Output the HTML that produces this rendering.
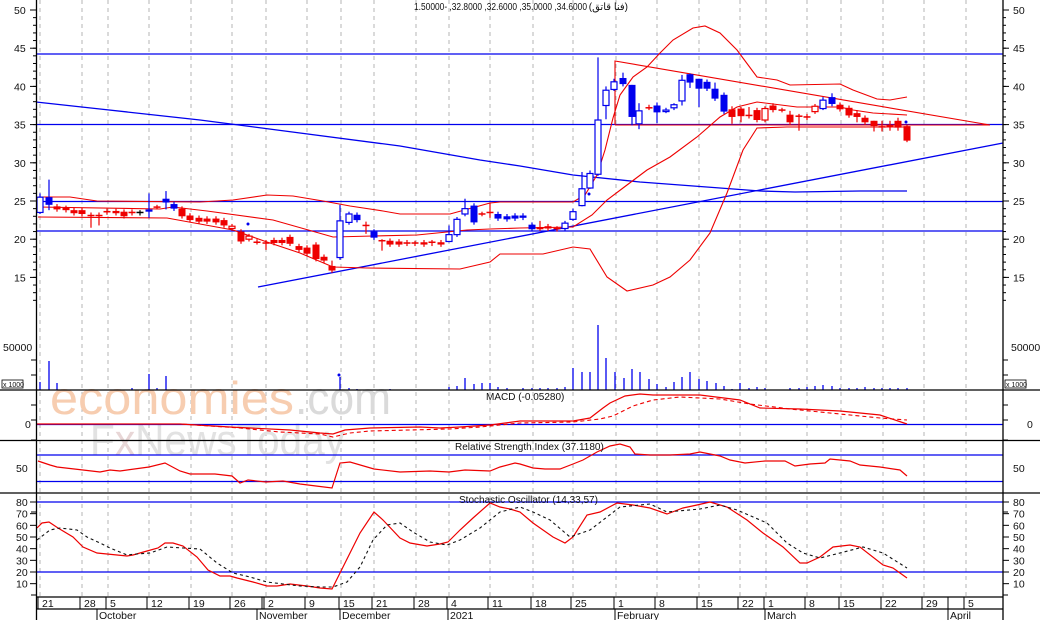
<!DOCTYPE html>
<html><head><meta charset="utf-8"><style>
html,body{margin:0;padding:0;background:#fff;width:1040px;height:620px;overflow:hidden}
svg{display:block}
text{font-family:"Liberation Sans","Noto Sans CJK SC",sans-serif;font-size:10.5px;fill:#111}
</style></head><body>
<svg id="s" width="1040" height="620" viewBox="0 0 1040 620" xmlns="http://www.w3.org/2000/svg">
<rect width="1040" height="620" fill="#fff"/>
<g id="grid" stroke="#b4b4b4" stroke-dasharray="4,4" stroke-width="1"></g>
<text x="50" y="414" textLength="244" lengthAdjust="spacingAndGlyphs" style="font-size:46px;fill:#f7cdb0">economies</text>
<text x="295" y="414" textLength="96" lengthAdjust="spacingAndGlyphs" style="font-size:46px;fill:#dadada">.com</text>
<text x="90" y="455" textLength="255" lengthAdjust="spacingAndGlyphs" style="font-size:44px;fill:#e2e2e2">F<tspan style="fill:#e8d6d6">x</tspan>NewsToday</text>
<g stroke="#0000ee" stroke-width="1.3" fill="none">
<line x1="36" y1="54" x2="1003" y2="54"/>
<line x1="36" y1="124.5" x2="1003" y2="124.5"/>
<line x1="36" y1="201.5" x2="1003" y2="201.5"/>
<line x1="36" y1="231" x2="1003" y2="231"/>
<polyline points="36,102 100,109 200,120 300,133 400,146 480,160 520,166 573,175 640,182 720,188 760,191 795,192 860,191 907,191"/>
<line x1="258" y1="287" x2="1003" y2="143"/>
<line x1="36" y1="424.5" x2="1003" y2="424.5"/>
<line x1="36" y1="455" x2="1003" y2="455"/>
<line x1="36" y1="481.5" x2="1003" y2="481.5"/>
<line x1="36" y1="502" x2="1003" y2="502"/>
<line x1="36" y1="572" x2="1003" y2="572"/>
</g>
<g stroke="#ee0000" stroke-width="1.1" fill="none">
<polyline points="38,197 70,197 97,201 200,202 233,200 267,195 293,196 323,201 350,206 383,211 400,214 450,214 490,203 500,202 573,202 585,195 597,175 605,150 613,118 620,95 633,77 647,67 660,53 673,40 693,28 705,26 720,33 737,50 757,77 777,80 790,85 840,84 853,90 877,99 890,100 907,97"/>
<polyline points="38,207 160,209 173,207 207,211 273,220 333,237 373,236 417,235 467,230 490,229 520,228 573,227 592,215 607,200 623,188 647,170 670,157 697,137 720,117 737,107 757,102 773,104 797,107 840,107 853,110 873,113 907,115"/>
<polyline points="38,217 167,218 233,230 267,242 300,253 333,267 367,268 460,269 490,262 500,254 543,254 573,247 590,249 607,277 627,291 653,285 670,277 690,260 710,233 727,193 743,150 757,128 787,127 907,127"/>
<polyline points="615,125 615,61 990,125 615,125"/>
</g>
<g id="cand"></g>
<g id="vol" stroke="#0000ee" stroke-width="1.3"></g>
<polyline fill="none" stroke="#ee0000" stroke-width="1.2" points="36,424 180,424 230,427 290,430 320,433 333,434 345,430 370,428 420,427 440,428 460,427 490,425 520,421 573,421 590,418 603,408 610,403 625,396 640,394 653,395 700,395 740,400 760,408 800,409 840,411 880,415 907,424"/>
<polyline fill="none" stroke="#ee0000" stroke-width="1.1" stroke-dasharray="4,3" points="36,424 180,424 210,426 240,428 280,432 320,434 333,437 350,433 370,431 450,429 480,427 500,425 520,423 573,422 600,419 613,416 633,406 653,400 680,397 720,399 750,404 790,409 840,414 880,418 907,420"/>
<polyline fill="none" stroke="#ee0000" stroke-width="1.2" points="38,461 50,465 57,467 83,470 100,472 110,470 120,471 149,467 165,463 180,471 190,474 215,474 232,476 240,483 248,480 266,482 283,481 300,484 316,486 332,488 340,463 350,462 374,469 400,472 430,471 449,472 465,470 490,471 500,467 515,463 520,464 533,468 545,469 560,469 573,464 583,460 597,452 610,446 620,444 630,447 635,454 650,455 670,455 690,454 700,452 710,454 720,456 730,460 745,463 765,461 785,461 795,466 810,464 825,463 830,459 850,461 860,465 880,467 900,470 907,476"/>
<polyline fill="none" stroke="#ee0000" stroke-width="1.2" points="37,528 42,523 49,522 58,528 73,537 83,547 97,553 107,554 127,556 133,555 147,551 158,548 165,543 173,543 183,546 197,557 208,570 220,576 230,576 237,578 253,582 267,586 277,586 290,584 307,586 320,588 332,589 340,573 350,553 360,533 374,512 383,520 400,538 410,543 427,546 440,544 448,542 460,530 473,518 490,503 500,507 510,509 520,512 533,523 553,537 565,543 573,537 587,515 600,512 617,503 633,505 650,508 667,514 683,508 697,505 710,502 727,507 747,520 763,533 783,547 800,563 807,563 820,557 833,547 850,545 860,547 883,565 893,568 907,578"/>
<polyline fill="none" stroke="#111" stroke-width="1.1" stroke-dasharray="3,3" points="37,540 50,530 60,528 77,530 87,537 100,543 110,548 127,555 137,554 150,553 167,547 183,548 200,549 217,563 233,573 250,577 267,582 283,584 300,586 320,587 333,587 347,582 360,567 373,540 387,525 400,523 413,532 430,542 447,545 460,540 480,528 500,512 520,507 533,512 550,520 570,537 590,530 607,517 620,507 650,504 667,512 700,509 720,505 737,510 767,523 787,543 803,553 820,558 840,553 863,547 883,553 907,568"/>
<g stroke="#000" stroke-width="1.3">
<line x1="0" y1="390" x2="1040" y2="390"/>
<line x1="0" y1="440.5" x2="1040" y2="440.5"/>
<line x1="0" y1="493" x2="1040" y2="493"/>
<line x1="36" y1="597" x2="1003" y2="597"/>
<line x1="36" y1="609" x2="1003" y2="609"/>
<line x1="36.5" y1="0" x2="36.5" y2="620"/>
<line x1="1003" y1="0" x2="1003" y2="620"/>
</g>
<g id="ticks" stroke="#000" stroke-width="1"></g>
<g id="lbl"></g>
<text x="414" y="10" textLength="173" lengthAdjust="spacingAndGlyphs" style="font-size:10px">1.50000- ,32.8000 ,32.6000 ,35.0000 ,34.6000</text>
<text x="628" y="10" style="font-size:10px" direction="rtl">(فنا قاتق)</text>
<text x="486" y="400" style="font-size:10px">MACD (-0.05280)</text>
<text x="455" y="450" style="font-size:10px">Relative Strength Index (37.1180)</text>
<text x="459" y="503" style="font-size:10px">Stochastic Oscillator (14,33,57)</text>
<text x="3" y="351">50000</text><text x="1011" y="351">50000</text>
<rect x="2" y="380" width="21" height="8" fill="#fff" stroke="#000" stroke-width="0.8"/>
<text x="3" y="387" style="font-size:7px">x 1000</text>
<rect x="1005" y="380" width="21" height="8" fill="#fff" stroke="#000" stroke-width="0.8"/>
<text x="1006" y="387" style="font-size:7px">x 1000</text>
</svg>
<script>
var NS="http://www.w3.org/2000/svg";
function el(p,t,a,txt){var e=document.createElementNS(NS,t);for(var k in a)e.setAttribute(k,a[k]);if(txt!=null)e.textContent=txt;document.getElementById(p).appendChild(e);return e;}
var dx=[40,82,108,149,191,232,266,307,341,374,416,449,490,533,573,616,657,699,740,766,807,841,883,924,966];
var dl=["21","28","5","12","19","26","2","9","15","21","28","4","11","18","25","1","8","15","22","1","8","15","22","29","5"];
dx.forEach(function(x,i){el("grid","line",{x1:x,y1:0,x2:x,y2:597});el("lbl","text",{x:x+2,y:607},dl[i]);el("ticks","line",{x1:x-2,y1:597,x2:x-2,y2:609});});
[[98,"October"],[258,"November"],[341,"December"],[449,"2021"],[616,"February"],[766,"March"],[949,"April"]].forEach(function(m){el("lbl","text",{x:m[0]+1,y:619},m[1]);el("ticks","line",{x1:m[0]-1,y1:609,x2:m[0]-1,y2:620});});
[262,764,948].forEach(function(x){el("ticks","line",{x1:x,y1:597,x2:x,y2:609});});
function py(p){return 10+(50-p)*7.64;}
[50,45,40,35,30,25,20,15].forEach(function(p){var y=py(p);el("lbl","text",{x:14,y:y+4},String(p));el("lbl","text",{x:1013,y:y+4},String(p));el("ticks","line",{x1:30,y1:y,x2:36,y2:y});el("ticks","line",{x1:1003,y1:y,x2:1009,y2:y});});
for(var p=12;p<=50;p++){var y=py(p);el("ticks","line",{x1:33,y1:y,x2:36,y2:y});el("ticks","line",{x1:1003,y1:y,x2:1006,y2:y});}
el("lbl","text",{x:25,y:428},"0");el("lbl","text",{x:1027,y:428},"0");
el("lbl","text",{x:16,y:472},"50");el("lbl","text",{x:1013,y:472},"50");
[80,70,60,50,40,30,20,10].forEach(function(v){var y=502+(80-v)*70/60;el("lbl","text",{x:16,y:y+4},String(v));el("lbl","text",{x:1013,y:y+4},String(v));el("ticks","line",{x1:30,y1:y,x2:36,y2:y});el("ticks","line",{x1:1003,y1:y,x2:1009,y2:y});});
[360,375,405,420,440,512,595].forEach(function(y){el("ticks","line",{x1:31,y1:y,x2:36,y2:y});el("ticks","line",{x1:1003,y1:y,x2:1008,y2:y});});
var C=[[40,23.5,25.5,'h',26,23.3],[49,25.5,24.5,'b',27.8,23.8],[57,24.3,23.9,'r'],[66,24.1,23.8,'r'],[74,23.8,23.4,'r'],[82,23.8,23.3,'r'],[91,23.1,23.1,'x',23.5,21.5],[99,23.1,23.0,'x',23.5,21.8],[107,23.7,23.5,'r'],[116,23.7,23.4,'r'],[124,23.6,23.0,'r'],[132,23.6,23.4,'r'],[140,23.5,23.4,'k'],[149,23.9,23.6,'b',26,22.8],[157,24.2,24.2,'x'],[166,25.3,24.8,'b',26.3,23.9],[174,24.6,24.0,'b'],[182,24.0,23.0,'r'],[190,23.1,22.5,'r'],[199,22.8,22.3,'r'],[207,22.7,22.3,'r'],[216,22.7,22.2,'r'],[224,22.5,21.8,'r'],[232,21.7,21.4,'H'],[241,21.0,19.7,'r'],[249,20.4,20.0,'H'],[257,19.7,19.6,'r'],[266,19.5,19.4,'x',19.9,18.6],[274,19.9,19.5,'r'],[282,19.9,19.5,'r'],[290,20.3,19.4,'r'],[299,19.1,18.6,'r'],[307,18.9,18.1,'r'],[316,19.3,17.4,'r'],[324,17.7,17.2,'r'],[332,16.5,15.9,'r',17.2,15.6],[340,17.6,22.4,'h',24.5,17.3],[349,22.2,23.3,'h'],[357,23.2,22.5,'b'],[366,21.8,21.8,'x',22.3,20.7],[374,21.0,20.2,'b'],[382,19.8,19.8,'x',20.0,18.5],[390,19.8,19.3,'r'],[399,19.7,19.3,'r'],[407,19.6,19.4,'r'],[415,19.5,19.4,'x'],[424,19.6,19.3,'r'],[432,19.6,19.4,'x'],[441,19.6,19.3,'r'],[449,19.7,20.6,'h',21.8,19.6],[457,20.6,22.6,'h'],[465,23.3,24.0,'h',25.3,23],[474,24.4,22.2,'b'],[482,23.3,23.3,'x'],[490,23.5,23.5,'x',24.8,22.8],[498,23.3,22.7,'b'],[507,23.0,22.6,'b'],[515,23.1,22.7,'b'],[523,23.1,22.8,'b'],[532,21.9,21.3,'b'],[540,21.6,21.3,'r',22.4,21.1],[548,21.7,21.4,'r'],[557,21.4,21.3,'x'],[565,21.4,22.1,'h'],[573,22.6,23.6,'h',24,22.4],[582,24.4,26.6,'h',28.8,24.3],[590,26.7,28.6,'h',29,26.6],[598,28.5,35.6,'h',43.8,28.3],[606,37.5,39.5,'h',40,35.7],[614,39.6,40.6,'h',41,39.4],[623,41.1,40.3,'b',41.8,40],[632,40.2,36.0,'b',40.2,34.9],[639,36.8,35.1,'h',37.8,34.4],[649,37.2,37.1,'x',37.6,36.9],[657,37.5,36.6,'b',37.9,35.2],[666,36.9,36.8,'h'],[674,37.2,37.6,'h',37.8,36.9],[682,38.1,40.8,'h',41.5,37.5],[690,41.6,40.5,'b',41.7,39.8],[699,41.0,39.7,'b',41,37.3],[707,40.6,39.7,'b'],[715,39.7,38.4,'b',40.5,38.1],[724,38.9,36.7,'b'],[732,37.0,36.0,'r',37.4,35.1],[741,37.1,36.1,'r',37.3,35.3],[749,36.2,36.2,'x',37.3,35.8],[757,36.9,35.6,'r'],[765,35.6,37.1,'H'],[773,37.5,36.9,'r'],[782,36.9,36.9,'x'],[790,36.3,35.3,'r',36.8,35],[799,36.1,36.1,'x',36.4,34.2],[807,36.1,35.9,'r'],[815,36.7,37.4,'H'],[823,37.1,38.2,'h',38.6,36.9],[832,38.6,37.7,'b',39.1,37.4],[840,37.6,37.0,'r'],[849,37.2,36.2,'r'],[857,36.5,36.0,'r',36.9,35.3],[865,35.9,35.3,'r'],[874,35.5,34.8,'r',35.5,34.1],[882,34.7,34.7,'x',35.5,34.1],[890,34.8,34.7,'x',35.5,34.2],[898,35.5,34.6,'r',35.9,34.2],[907,34.8,32.9,'r',34.9,32.7]];
C.forEach(function(c){var x=c[0],o=c[1],cl=c[2],t=c[3];var hi=c[4]!=null?c[4]:Math.max(o,cl)+0.3,lo=c[5]!=null?c[5]:Math.min(o,cl)-0.3;
var col=(t=='b'||t=='h')?'#0000ee':(t=='k'?'#000':'#ee0000');
el("cand","line",{x1:x,y1:py(hi),x2:x,y2:py(lo),stroke:col,"stroke-width":1.2});
var y1=py(Math.max(o,cl)),y2=py(Math.min(o,cl));
if(t=='x'||t=='k'){el("cand","line",{x1:x-3.5,y1:y1,x2:x+3.5,y2:y1,stroke:col,"stroke-width":1.5});return;}
var h=Math.max(y2-y1,1.5);
if(t=='h'||t=='H')el("cand","rect",{x:x-3,y:y1,width:6,height:h,fill:"#fff",stroke:col,"stroke-width":1.2});
else el("cand","rect",{x:x-3.5,y:y1,width:7,height:h,fill:col});});
[[248,224],[339,375],[589,194],[906,122]].forEach(function(d){el("cand","circle",{cx:d[0],cy:d[1],r:1.5,fill:"#0000ee"});});
var V=[[40,382],[49,361],[57,383],[132,388],[149,374],[157,388],[166,376],[340,377],[349,388],[357,389],[390,389],[449,387],[457,386],[465,378],[474,384],[482,383],[490,383],[498,387],[507,388],[523,388],[532,388],[540,388],[548,388],[557,388],[565,387],[573,368],[582,372],[590,372],[598,325],[606,358],[615,372],[624,378],[632,369],[640,372],[649,379],[657,384],[666,387],[674,382],[682,377],[690,372],[699,379],[707,381],[716,383],[724,386],[732,389],[740,383],[749,388],[757,387],[765,388],[790,388],[799,388],[807,387],[815,386],[823,385],[832,386],[840,388],[849,388],[857,388],[865,387],[874,388],[882,388],[890,388],[898,388],[907,388]];
V.forEach(function(v){el("vol","line",{x1:v[0],y1:v[1],x2:v[0],y2:390});});
</script>
</body></html>
